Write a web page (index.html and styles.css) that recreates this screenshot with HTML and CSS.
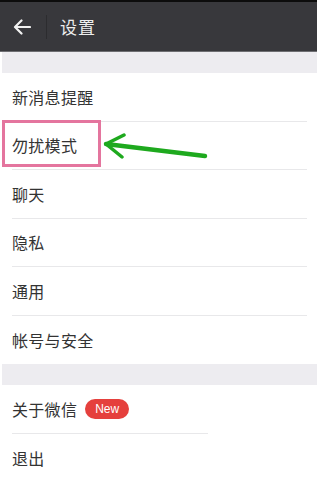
FILE: index.html
```html
<!DOCTYPE html>
<html lang="zh-CN">
<head>
<meta charset="utf-8">
<title>设置</title>
<link rel="stylesheet" href="styles.css">
</head>
<body>
<div class="page">
  <header class="topbar">
    <svg class="back" width="18" height="16" viewBox="0 0 18 16">
      <path d="M17 8H2.5M8.5 1.5L2 8l6.5 6.5" fill="none" stroke="#f2f2f2" stroke-width="2.2" stroke-linecap="round" stroke-linejoin="round"/>
    </svg>
    <span class="divider"></span>
    <h1 class="title">设置</h1>
  </header>
  <div class="band"></div>
  <ul class="group">
    <li class="row"><span>新消息提醒</span></li>
    <li class="row"><span>勿扰模式</span></li>
    <li class="row"><span>聊天</span></li>
    <li class="row"><span>隐私</span></li>
    <li class="row"><span>通用</span></li>
    <li class="row last"><span>帐号与安全</span></li>
  </ul>
  <div class="band"></div>
  <ul class="group">
    <li class="row short"><span>关于微信</span><span class="badge">New</span></li>
    <li class="row last"><span>退出</span></li>
  </ul>

  <div class="highlight"></div>
  <svg class="arrow" width="110" height="30" viewBox="0 0 110 30">
    <path d="M3 11 L102 23" fill="none" stroke="#1ea91e" stroke-width="4.5" stroke-linecap="round"/>
    <path d="M3 11 L21 2 M3 11 L19 24" fill="none" stroke="#1ea91e" stroke-width="3.5" stroke-linecap="round"/>
  </svg>
</div>
</body>
</html>
```

FILE: styles.css
```css
* { box-sizing: border-box; }
html, body { margin: 0; padding: 0; background: #ffffff; }
body {
  font-family: "Noto Sans CJK SC", "Noto Sans", sans-serif;
  color: #333333;
}
.page {
  position: relative;
  width: 317px;
  height: 488px;
  background: #ffffff;
}
.topbar {
  height: 52px;
  background: #38383c;
  border-top: 2px solid #0c0c0c;
  border-bottom: 1px solid #6e6e72;
  display: flex;
  align-items: center;
  padding-left: 13px;
}
.back { display: block; }
.divider {
  width: 1px;
  height: 24px;
  background: #2c2c2f;
  margin-left: 15px;
  margin-right: 13px;
}
.title {
  margin: 0;
  font-size: 17px;
  font-weight: normal;
  color: #eeeeee;
  letter-spacing: 1px;
}
.band {
  height: 21px;
  background: #edecf0;
  margin-left: 2px;
}
.group {
  list-style: none;
  margin: 0;
  padding: 0;
}
.row {
  height: 48.5px;
  margin-left: 12px;
  margin-right: 10px;
  border-bottom: 1px solid #e8e8ea;
  display: flex;
  align-items: center;
  font-size: 16px;
  letter-spacing: 0.3px;
}
.row.last { border-bottom: none; }
.row.short { margin-right: 109px; }
.badge {
  margin-left: 8px;
  background: #e5403d;
  color: #ffffff;
  font-family: "Liberation Sans", Arial, sans-serif;
  font-size: 12px;
  line-height: 20px;
  height: 20px;
  padding: 0 10px;
  border-radius: 10px;
  letter-spacing: 0;
}
.highlight {
  position: absolute;
  left: 2px;
  top: 120px;
  width: 99px;
  height: 47px;
  border: 3px solid #e4759e;
}
.arrow {
  position: absolute;
  left: 103px;
  top: 133px;
}
```
